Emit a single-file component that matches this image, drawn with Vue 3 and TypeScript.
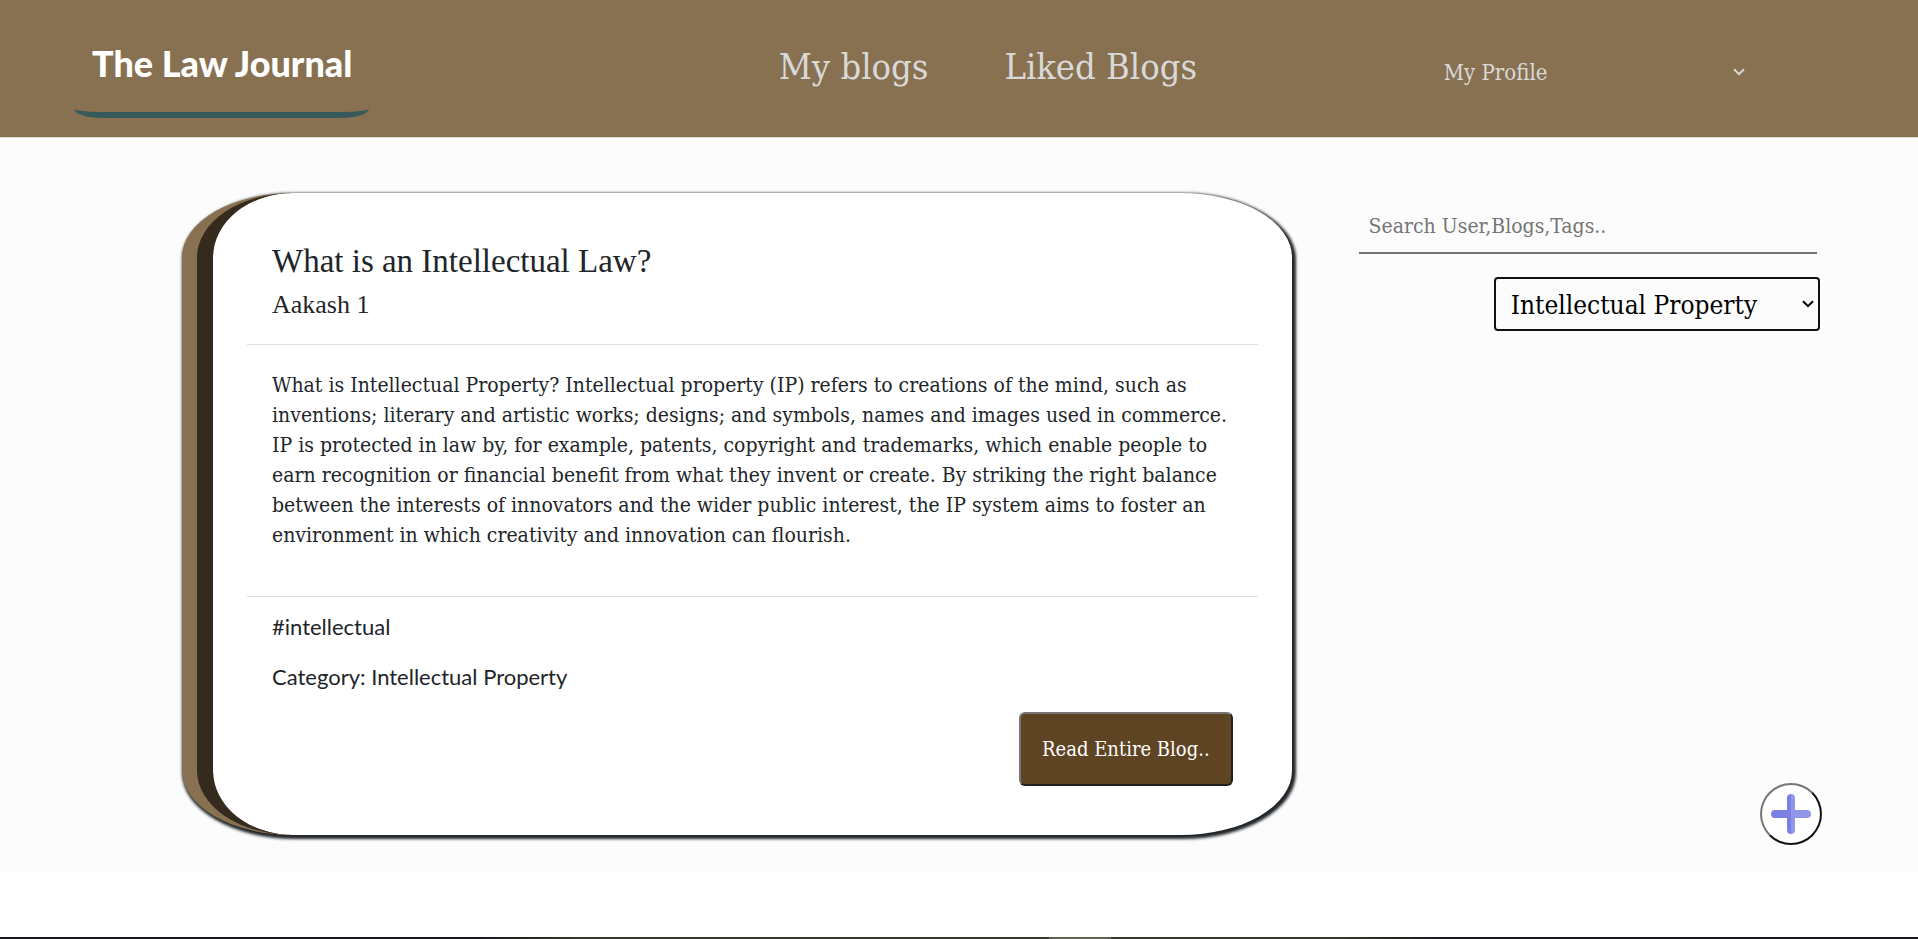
<script setup lang="ts">
import { ref } from 'vue'

interface Blog {
  title: string
  author: string
  body: string
  tag: string
  category: string
}

const blog: Blog = {
  title: 'What is an Intellectual Law?',
  author: 'Aakash 1',
  body: [
    'What is Intellectual Property? Intellectual property (IP) refers to creations of the mind, such as',
    'inventions; literary and artistic works; designs; and symbols, names and images used in commerce.',
    'IP is protected in law by, for example, patents, copyright and trademarks, which enable people to',
    'earn recognition or financial benefit from what they invent or create. By striking the right balance',
    'between the interests of innovators and the wider public interest, the IP system aims to foster an',
    'environment in which creativity and innovation can flourish.',
  ].join('\n'),
  tag: '#intellectual',
  category: 'Intellectual Property',
}

const search = ref('')
const category = ref('Intellectual Property')
const profile = ref('My Profile')
</script>

<template>
  <div class="page">
    <header class="topbar">
      <a class="brand" href="#">The Law Journal</a>
      <nav class="links">
        <a href="#">My blogs</a>
        <a href="#">Liked Blogs</a>
      </nav>
      <div class="picker profile">
        <select v-model="profile" aria-label="Profile menu">
          <option>My Profile</option>
        </select>
        <svg class="chevron" viewBox="0 0 12 8" width="12" height="8" aria-hidden="true">
          <path d="M1 1.2l5 5 5-5" fill="none" stroke="currentColor" stroke-width="2" />
        </svg>
      </div>
    </header>

    <main class="content">
      <article class="card">
        <header class="card-head">
          <h1>{{ blog.title }}</h1>
          <h2>{{ blog.author }}</h2>
        </header>
        <p class="card-body">{{ blog.body }}</p>
        <footer class="card-foot">
          <p>{{ blog.tag }}</p>
          <p>Category: {{ blog.category }}</p>
          <button class="read" type="button">Read Entire Blog..</button>
        </footer>
      </article>

      <aside class="side">
        <input v-model="search" class="search" type="text" placeholder="Search User,Blogs,Tags.." aria-label="Search" />
        <div class="picker category">
          <select v-model="category" aria-label="Category">
            <option>Intellectual Property</option>
          </select>
          <svg class="chevron" viewBox="0 0 12 8" width="12" height="8" aria-hidden="true">
            <path d="M1 1.2l5 5 5-5" fill="none" stroke="currentColor" stroke-width="2" />
          </svg>
        </div>
        <button class="add" type="button" aria-label="Add blog">
          <svg viewBox="0 0 40 40" width="40" height="40" aria-hidden="true">
            <path d="M20 0a4 4 0 0 0-4 4v12H4a4 4 0 0 0 0 8h12v12a4 4 0 0 0 4 4z" fill="#7b80e6" />
            <path d="M20 0a4 4 0 0 1 4 4v12h12a4 4 0 0 1 0 8H24v12a4 4 0 0 1-4 4z" fill="#9296ea" />
          </svg>
        </button>
      </aside>
    </main>

    <div class="banner"></div>
  </div>
</template>

<style>
body {
  margin: 0;
  background: #fff;
}
</style>

<style scoped>
.page {
  --slab: "DejaVu Serif Condensed", "DejaVu Serif", serif;
  height: 100vh;
  display: flex;
  flex-direction: column;
  overflow: hidden;
  color: #212529;
  font-family: var(--slab);
}
.page * {
  box-sizing: border-box;
}

.topbar {
  display: grid;
  grid-template-columns: 40.6% 34% 17%;
  align-items: start;
  flex: none;
  height: 138px;
  background: #887150;
  border-bottom: 1px solid #dedad3;
}
.brand {
  justify-self: start;
  margin: 24px 0 0 74px;
  padding: 9px 17px 19px 18px;
  border-bottom: 6px solid #36595b;
  border-radius: 10%;
  color: #fff;
  font: 900 36px/60px Lato, "Liberation Sans", sans-serif;
  text-decoration: none;
  white-space: nowrap;
}
.links {
  display: flex;
  gap: 76px;
  padding-top: 40px;
}
.links a {
  color: #d9d9d9;
  font-size: 36px;
  line-height: 54px;
  text-decoration: none;
  white-space: nowrap;
}

.picker {
  position: relative;
}
.picker select {
  appearance: none;
  width: 100%;
  height: 100%;
  border: 0;
  background: transparent;
  color: inherit;
  font: inherit;
}
.chevron {
  position: absolute;
  top: 50%;
  right: 6px;
  margin-top: -4px;
  pointer-events: none;
}
.profile {
  height: 46px;
  margin-top: 49px;
  color: #d9d9d9;
  font-size: 22px;
}
.profile select {
  padding: 0 13px;
}
.profile .chevron {
  right: 12px;
}

.content {
  display: grid;
  grid-template-columns: 67.66% 1fr;
  column-gap: 67px;
  flex: none;
  padding: 55px 96px 36px 182px;
  background: #fcfcfc;
}
.card {
  padding: 38px 34px 49px;
  border: 0 ridge #887150;
  border-left-width: 31px;
  border-radius: 10%;
  background: #fff;
  box-shadow: 2px 2px 3px 2px #212529;
}
.card-head {
  padding: 10px 25px 22px;
  border-bottom: 1px solid #dfdfdf;
}
.card-head h1,
.card-head h2 {
  margin: 0;
  font-family: "Liberation Serif", serif;
  font-weight: 400;
}
.card-head h1 {
  font-size: 33px;
  line-height: 40px;
}
.card-head h2 {
  margin-top: 7px;
  font-size: 26px;
  line-height: 34px;
}
.card-body {
  margin: 0;
  padding: 25px 25px 46px;
  border-bottom: 1px solid #dfdfdf;
  font-size: 21px;
  line-height: 30px;
  white-space: pre;
}
.card-foot {
  display: flex;
  flex-direction: column;
  padding: 15px 25px 0;
  font-family: Lato, sans-serif;
}
.card-foot p {
  margin: 0 0 20px;
  font-size: 22px;
  line-height: 30px;
}
.read {
  align-self: flex-end;
  height: 74px;
  padding: 0 21px;
  border: 2px solid;
  border-color: #767676 #212121 #212121 #767676;
  border-radius: 6px;
  background: #5e4422;
  color: #fff;
  font: 20px var(--slab);
  white-space: nowrap;
}

.side {
  display: flex;
  flex-direction: column;
  align-items: flex-end;
}
.search {
  align-self: stretch;
  height: 61px;
  margin-right: 5px;
  padding: 6px 10px 0;
  border: 0;
  border-bottom: 2px solid #757575;
  background: transparent;
  font: 21px var(--slab);
}
.search::placeholder {
  color: #757575;
  opacity: 1;
}
.category {
  width: 70.4%;
  height: 54px;
  margin: 23px 2px 0 0;
  border: 2px solid #111;
  border-radius: 4px;
  color: #000;
  font-size: 26px;
}
.category select {
  padding: 2px 15px 0;
}
.category .chevron {
  right: 4px;
}
.add {
  display: grid;
  place-items: center;
  width: 62px;
  height: 62px;
  margin-top: auto;
  margin-bottom: -10px;
  padding: 0;
  border: 2px solid;
  border-color: #767676 #111 #111 #767676;
  border-radius: 50%;
  background: #fff;
}
.banner {
  flex: none;
  height: 40px;
  margin-top: 66px;
  background:
    linear-gradient(90deg, transparent 54.7%, #5e6153 54.7% 57.9%, transparent 57.9%),
    linear-gradient(90deg, #1a181c 25%, #33362a 30% 70%, #1a181c 75%);
}
</style>
